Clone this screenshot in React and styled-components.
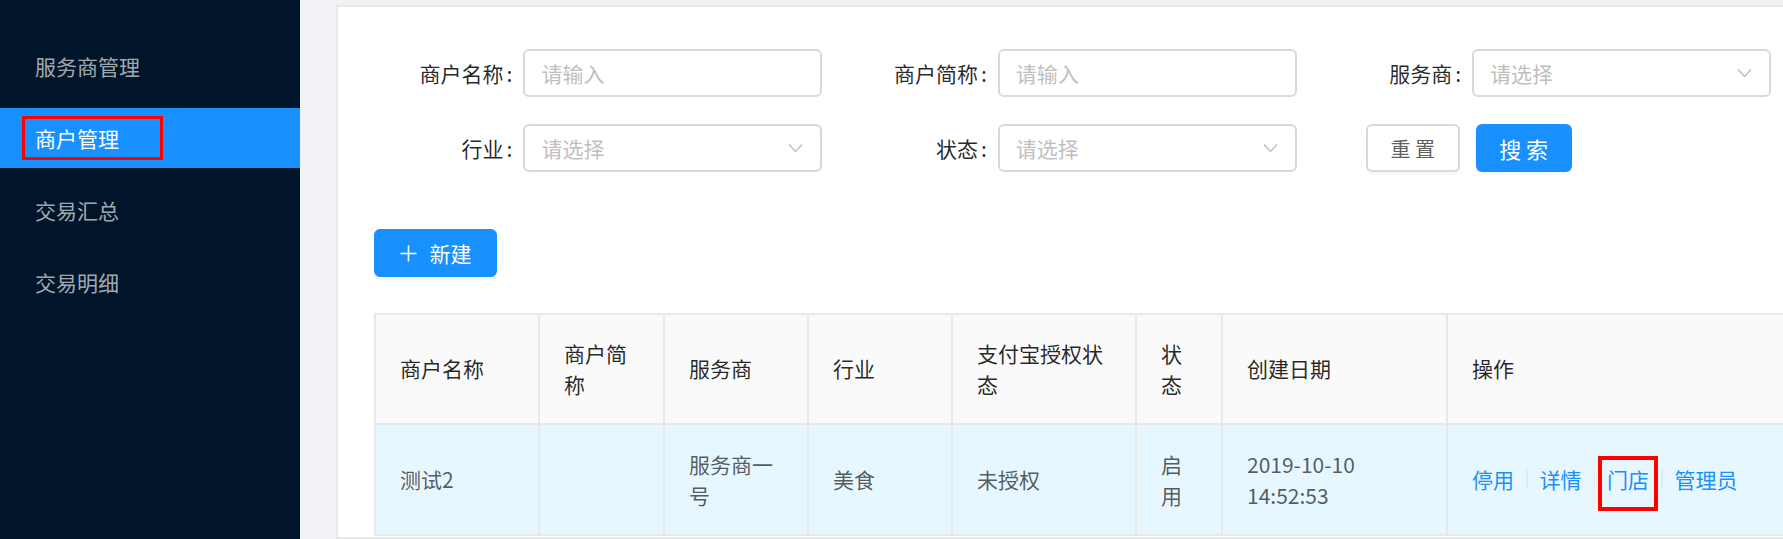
import React from 'react';
import styled, { createGlobalStyle } from 'styled-components';

const GlobalStyle = createGlobalStyle`
  html, body {
    margin: 0;
    padding: 0;
    overflow: hidden;
    background: #f0f2f5;
  }
  body {
    font-family: "Noto Sans CJK SC", "Noto Sans", sans-serif;
  }
  * { box-sizing: border-box; }
`;

const Layout = styled.div`
  display: flex;
  width: 1845px;
  height: 539px;
  background: #f0f2f5;
  overflow: hidden;
`;

const Sider = styled.aside`
  flex: none;
  width: 300px;
  background: #001529;
  padding-top: 36px;
  display: flex;
  flex-direction: column;
  gap: 12px;
`;

const MenuItem = styled.div`
  position: relative;
  height: 60px;
  line-height: 60px;
  padding-left: 35px;
  font-size: 21px;
  color: ${p => (p.$active ? '#ffffff' : 'rgba(255,255,255,0.65)')};
  background: ${p => (p.$active ? '#1890ff' : 'transparent')};
`;

const MenuMark = styled.span`
  position: absolute;
  left: 22px;
  top: 8px;
  width: 141px;
  height: 44px;
  border: 3px solid #ff0000;
`;

const Main = styled.main`
  flex: 1;
  min-width: 0;
  padding: 5px 36px 0 36px;
`;

const Card = styled.section`
  background: #ffffff;
  border: 2px solid #e8e8e8;
  padding: 42px 36px;
  height: 100%;
  width: 1473px;
`;

const FormGrid = styled.div`
  display: grid;
  grid-template-columns: repeat(3, 1fr);
  column-gap: 26px;
  row-gap: 27px;
`;

const FormItem = styled.div`
  display: grid;
  grid-template-columns: 1fr 2fr;
  align-items: center;
`;

const Label = styled.label`
  text-align: right;
  padding-right: 11px;
  font-size: 21px;
  line-height: 48px;
  color: rgba(0, 0, 0, 0.85);
  white-space: nowrap;
  &::after {
    content: ':';
    margin-left: 3px;
  }
`;

const Field = styled.div`
  height: 48px;
  border: 2px solid #d9d9d9;
  border-radius: 6px;
  background: #fff;
  padding: 0 17px 0 16px;
  display: flex;
  align-items: center;
  justify-content: space-between;
  font-size: 21px;
`;

const Placeholder = styled.span`
  color: #bfbfbf;
`;

const Arrow = styled.svg`
  width: 15px;
  height: 10px;
  flex: none;
`;

const ButtonCell = styled.div`
  display: flex;
  gap: 16px;
  padding-left: 43px;
`;

const Button = styled.button`
  height: 48px;
  width: ${p => p.$w}px;
  padding: 0;
  border-radius: 6px;
  font-family: inherit;
  font-size: ${p => p.$fs || 21}px;
  display: inline-flex;
  align-items: center;
  justify-content: center;
  gap: 13px;
  border: 2px solid ${p => (p.$primary ? '#1890ff' : '#d9d9d9')};
  background: ${p => (p.$primary ? '#1890ff' : '#ffffff')};
  color: ${p => (p.$primary ? '#ffffff' : 'rgba(0,0,0,0.65)')};
  box-shadow: 0 3px 0 rgba(0, 0, 0, 0.03);
  white-space: pre;
`;

const Toolbar = styled.div`
  margin-top: 57px;
  display: flex;
`;

const Table = styled.table`
  margin-top: 36px;
  width: 1500px;
  table-layout: fixed;
  border-collapse: collapse;
  font-size: 21px;
`;

const Th = styled.th`
  background: #fafafa;
  border: 2px solid #e8e8e8;
  padding: 22px 24px;
  line-height: 31.5px;
  text-align: left;
  font-weight: 400;
  color: rgba(0, 0, 0, 0.85);
  height: 110px;
`;

const Td = styled.td`
  background: #e6f7ff;
  border: 2px solid #e8e8e8;
  padding: 22px 24px;
  line-height: 31px;
  color: rgba(0, 0, 0, 0.65);
  height: 111px;
  vertical-align: middle;
`;

const Actions = styled.div`
  display: flex;
  align-items: center;
  white-space: nowrap;
`;

const Link = styled.a`
  position: relative;
  color: #1890ff;
  text-decoration: none;
  ${p =>
    p.$marked &&
    `
    &::after {
      content: '';
      position: absolute;
      left: -9px;
      right: -9px;
      top: 50%;
      height: 47px;
      margin-top: -24px;
      border: 4px solid #ff0000;
    }
  `}
`;

const Divider = styled.span`
  display: inline-block;
  width: 1.5px;
  height: 19px;
  margin: 0 12px;
  background: #e8e8e8;
`;

const PlusIcon = () => (
  <svg width="17" height="17" viewBox="0 0 17 17">
    <path d="M8.5 0.5V16.5M0.5 8.5H16.5" stroke="#fff" strokeWidth="1.6" fill="none" />
  </svg>
);

const Chevron = () => (
  <Arrow viewBox="0 0 15 10">
    <path d="M1 1.5L7.5 8.5L14 1.5" stroke="#bfbfbf" strokeWidth="1.5" fill="none" />
  </Arrow>
);

const menu = ['服务商管理', '商户管理', '交易汇总', '交易明细'];
const colWidths = [164, 125, 144, 144, 184, 86, 225, 428];
const headers = ['商户名称', '商户简称', '服务商', '行业', '支付宝授权状态', '状态', '创建日期', '操作'];

export default function App() {
  return (
    <>
      <GlobalStyle />
      <Layout>
        <Sider>
          {menu.map((m, i) => (
            <MenuItem key={m} $active={i === 1}>
              {m}
              {i === 1 && <MenuMark />}
            </MenuItem>
          ))}
        </Sider>
        <Main>
          <Card>
            <FormGrid>
              <FormItem>
                <Label>商户名称</Label>
                <Field><Placeholder>请输入</Placeholder></Field>
              </FormItem>
              <FormItem>
                <Label>商户简称</Label>
                <Field><Placeholder>请输入</Placeholder></Field>
              </FormItem>
              <FormItem>
                <Label>服务商</Label>
                <Field><Placeholder>请选择</Placeholder><Chevron /></Field>
              </FormItem>
              <FormItem>
                <Label>行业</Label>
                <Field><Placeholder>请选择</Placeholder><Chevron /></Field>
              </FormItem>
              <FormItem>
                <Label>状态</Label>
                <Field><Placeholder>请选择</Placeholder><Chevron /></Field>
              </FormItem>
              <ButtonCell>
                <Button $w={94} $fs={20}>重 置</Button>
                <Button $w={96} $fs={22} $primary>搜 索</Button>
              </ButtonCell>
            </FormGrid>
            <Toolbar>
              <Button $w={123} $primary>
                <PlusIcon />
                新建
              </Button>
            </Toolbar>
            <Table>
              <colgroup>
                {colWidths.map((w, i) => (
                  <col key={i} style={{ width: `${w}px` }} />
                ))}
              </colgroup>
              <thead>
                <tr>
                  {headers.map(h => (
                    <Th key={h}>{h}</Th>
                  ))}
                </tr>
              </thead>
              <tbody>
                <tr>
                  <Td>测试2</Td>
                  <Td></Td>
                  <Td>服务商一号</Td>
                  <Td>美食</Td>
                  <Td>未授权</Td>
                  <Td>启用</Td>
                  <Td>2019-10-10 14:52:53</Td>
                  <Td>
                    <Actions>
                      <Link>停用</Link>
                      <Divider />
                      <Link>详情</Link>
                      <Divider />
                      <Link $marked>门店</Link>
                      <Divider />
                      <Link>管理员</Link>
                    </Actions>
                  </Td>
                </tr>
              </tbody>
            </Table>
          </Card>
        </Main>
      </Layout>
    </>
  );
}
